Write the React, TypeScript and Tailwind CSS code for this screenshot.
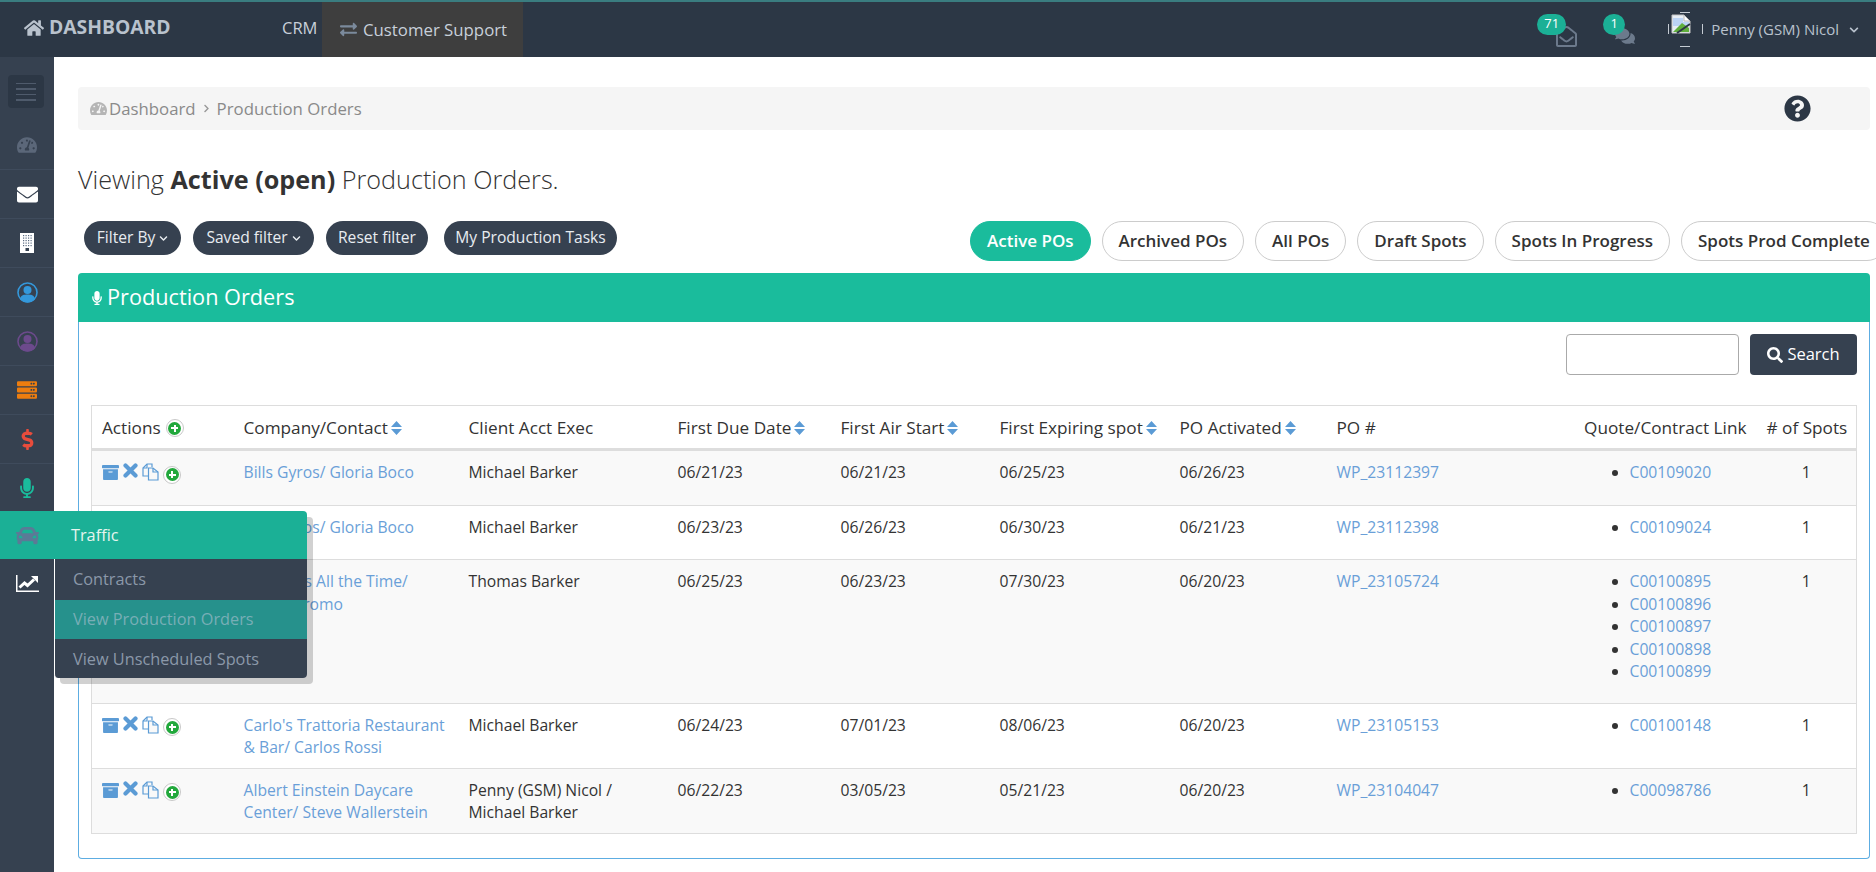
import {
  FaArchive,
  FaCar,
  FaChevronDown,
  FaChevronRight,
  FaComments,
  FaDollarSign,
  FaEnvelope,
  FaExchangeAlt,
  FaHome,
  FaMicrophone,
  FaQuestionCircle,
  FaRegEnvelopeOpen,
  FaSearch,
  FaServer,
  FaTachometerAlt,
} from "react-icons/fa";

type Row = {
  company: string;
  exec: string;
  due: string;
  air: string;
  expiring: string;
  activated: string;
  po: string;
  links: string[];
};

const rows: Row[] = [
  {
    company: "Bills Gyros/ Gloria Boco",
    exec: "Michael Barker",
    due: "06/21/23",
    air: "06/21/23",
    expiring: "06/25/23",
    activated: "06/26/23",
    po: "WP_23112397",
    links: ["C00109020"],
  },
  {
    company: "Bills Gyros/ Gloria Boco",
    exec: "Michael Barker",
    due: "06/23/23",
    air: "06/26/23",
    expiring: "06/30/23",
    activated: "06/21/23",
    po: "WP_23112398",
    links: ["C00109024"],
  },
  {
    company: "Antonio's All the Time/ Marco Promo",
    exec: "Thomas Barker",
    due: "06/25/23",
    air: "06/23/23",
    expiring: "07/30/23",
    activated: "06/20/23",
    po: "WP_23105724",
    links: ["C00100895", "C00100896", "C00100897", "C00100898", "C00100899"],
  },
  {
    company: "Carlo's Trattoria Restaurant & Bar/ Carlos Rossi",
    exec: "Michael Barker",
    due: "06/24/23",
    air: "07/01/23",
    expiring: "08/06/23",
    activated: "06/20/23",
    po: "WP_23105153",
    links: ["C00100148"],
  },
  {
    company: "Albert Einstein Daycare Center/ Steve Wallerstein",
    exec: "Penny (GSM) Nicol / Michael Barker",
    due: "06/22/23",
    air: "03/05/23",
    expiring: "05/21/23",
    activated: "06/20/23",
    po: "WP_23104047",
    links: ["C00098786"],
  },
];

const tabs = ["Archived POs", "All POs", "Draft Spots", "Spots In Progress", "Spots Prod Complete"];

const SortArrows = () => (
  <svg width="11" height="14" viewBox="0 0 11 14" className="inline-block ml-[3px] align-[-1px]">
    <path d="M5.5 0 L11 6 H0 Z M0 8 H11 L5.5 14 Z" fill="#5b9bd5" />
  </svg>
);

const AddIcon = () => (
  <span className="inline-flex w-[18px] h-[18px] rounded-full bg-white border border-[#c8c8c8] items-center justify-center">
    <span className="w-[13px] h-[13px] rounded-full bg-[#22a83c] flex items-center justify-center relative">
      <span className="absolute w-[7px] h-[2px] bg-white" />
      <span className="absolute w-[2px] h-[7px] bg-white" />
    </span>
  </span>
);

const CloseIcon = () => (
  <svg width="15" height="15" viewBox="0 0 15 15">
    <path d="M2.5 2.5 L12.5 12.5 M12.5 2.5 L2.5 12.5" stroke="#5b9bd5" strokeWidth="4.2" strokeLinecap="round" />
  </svg>
);

const CopyIcon = () => (
  <svg width="17" height="18" viewBox="0 0 17 18" fill="none" stroke="#5b9bd5" strokeWidth="1.2">
    <path d="M10 4 V1 H5 L1 5 V13 H6" />
    <path d="M5 1 V5 H1" />
    <path d="M6.5 5 H11 L16 9 V17 H6.5 Z" fill="#f9f9f9" />
    <path d="M11 5 V9 H16" />
  </svg>
);

const BuildingIcon = () => (
  <svg width="14" height="20" viewBox="0 0 14 20">
    <rect width="14" height="20" fill="#fff" />
    {[3, 5.5, 8, 10.5].map((x) =>
      [2, 4.5, 7, 9.5, 12].map((y) => (
        <rect key={`${x}-${y}`} x={x} y={y} width="1.2" height="1.2" fill="#5b6b82" />
      ))
    )}
    <rect x="5.5" y="15" width="3.5" height="3" fill="#364150" />
  </svg>
);

const PersonRing = ({ color }: { color: string }) => (
  <svg width="21" height="21" viewBox="0 0 21 21">
    <circle cx="10.5" cy="10.5" r="9.5" fill="none" stroke={color} strokeWidth="1.6" />
    <circle cx="10.5" cy="8" r="4" fill={color} />
    <path d="M3 17 C4 13 7 12.5 10.5 12.5 C14 12.5 17 13 18 17 C15 21.5 6 21.5 3 17 Z" fill={color} />
  </svg>
);

const TrendIcon = () => (
  <svg width="23" height="17" viewBox="0 0 23 17" fill="none">
    <path d="M0.75 0 V16.25 H23" stroke="#fff" strokeWidth="1.5" />
    <path d="M3.5 12.5 L8.5 8 L11.5 10.5 L18 4.5" stroke="#fff" strokeWidth="3" />
    <path d="M15 1 H22 V8 Z" fill="#fff" />
  </svg>
);

const BrokenImage = () => (
  <svg width="20" height="20" viewBox="0 0 20 20">
    <path d="M1 1 H13 L19 7 V19 H1 Z" fill="#e8eef5" stroke="#c4c4c4" />
    <path d="M13 1 V7 H19 Z" fill="#fff" stroke="#b8b8b8" />
    <path d="M2 4 H12 V8 H18 V12 L2 12 Z" fill="#bcd4f5" />
    <path d="M2 18 L11 9 L18 14 V18 Z" fill="#5fae3c" />
    <path d="M6 19 L19 10" stroke="#2c3745" strokeWidth="2" />
  </svg>
);

const AvatarRing = () => (
  <svg width="35" height="35" viewBox="0 0 35 35" fill="none" stroke="#c5cbd3" className="absolute left-0 top-0">
    <path d="M12 0.5 H22" />
    <path d="M12 34.5 H22" />
    <path d="M0.5 12 V22" />
    <path d="M34.5 12 V22" />
  </svg>
);

const sideIcons = [
  <FaTachometerAlt size={20} className="text-[#5b6779]" />,
  <FaEnvelope size={21} className="text-white" />,
  <BuildingIcon />,
  <PersonRing color="#3498db" />,
  <PersonRing color="#6c4a8c" />,
  <FaServer size={20} className="text-[#ed7d0f]" />,
  <FaDollarSign size={21} className="text-[#e74c3c]" />,
  <FaMicrophone size={20} className="text-[#1abc9c]" />,
];

const TopBar = () => (
  <header className="h-[57px] shrink-0 bg-[#2c3745] border-t-2 border-[#3a7d80] flex items-stretch text-[#c8d0da]">
    <div className="w-[282px] pl-[24px] flex items-center pb-[4px] shrink-0">
      <FaHome size={20} className="text-[#b9c2cd]" />
      <span className="ml-[5px] text-[19.3px] font-bold text-[#b9c2cd]">DASHBOARD</span>
    </div>
    <div className="w-[40px] flex items-center text-[16.5px] pb-[2px]">CRM</div>
    <div className="w-[201px] bg-[#3e3e3e] flex items-center pl-[18px] text-[16.8px]">
      <FaExchangeAlt size={17} className="text-[#7b8a9c]" />
      <span className="ml-[6px]">Customer Support</span>
    </div>
    <div className="ml-auto flex items-center pr-[17px]">
      <div className="relative w-[40px] h-[30px] mr-[26px] ml-[2px]">
        <FaRegEnvelopeOpen size={21} className="absolute right-0 bottom-[-2px] text-[#6c7a8c]" />
        <span className="absolute left-0 top-[-1px] w-[29px] h-[21px] rounded-full bg-[#1bb096] text-white text-[13px] flex items-center justify-center">
          71
        </span>
      </div>
      <div className="relative w-[32px] h-[30px] mr-[33px]">
        <FaComments size={20} className="absolute right-0 bottom-[-1px] text-[#6c7a8c]" />
        <span className="absolute left-0 top-[-1px] w-[22px] h-[21px] rounded-full bg-[#1bb096] text-white text-[13px] flex items-center justify-center">
          1
        </span>
      </div>
      <div className="relative w-[35px] h-[35px] pl-[3px] pt-[2px] mr-[8px]">
        <AvatarRing />
        <BrokenImage />
      </div>
      <span className="text-[15px] text-[#b9c2cd]">Penny (GSM) Nicol</span>
      <FaChevronDown size={10} className="ml-[10px] text-[#b9c2cd]" />
    </div>
  </header>
);

const SideBar = () => (
  <aside className="relative w-[54px] shrink-0 bg-[#364150]">
    <div className="h-[64px] pt-[18px] pl-[8px]">
      <div className="w-[36px] h-[33px] rounded-[4px] bg-[#2c3745] flex flex-col items-center justify-center gap-[4px]">
        <span className="w-[20px] h-[1.5px] bg-[#4f5b6c]" />
        <span className="w-[20px] h-[1.5px] bg-[#4f5b6c]" />
        <span className="w-[20px] h-[1.5px] bg-[#4f5b6c]" />
        <span className="w-[20px] h-[1.5px] bg-[#4f5b6c]" />
      </div>
    </div>
    {sideIcons.map((icon, i) => (
      <div key={i} className="h-[49px] flex items-center justify-center border-b border-[#3f4b5c] last:border-b-0">
        {icon}
      </div>
    ))}
    <div className="h-[46px]" />
    <div className="h-[49px] flex items-center justify-center">
      <TrendIcon />
    </div>

    {/* flyout for the hovered Traffic item */}
    <div className="absolute left-[54px] top-[454px] z-10 w-[253px] rounded-[4px] shadow-[6px_6px_0_rgba(0,0,0,0.18)]">
      <div className="h-[48px] ml-[-54px] bg-[#1bb096] rounded-tr-[4px] flex items-center">
        <span className="w-[54px] flex justify-center">
          <FaCar size={23} className="text-[#5b7a96]" />
        </span>
        <span className="ml-[17px] text-[16.3px] text-[#e6f5ef]">Traffic</span>
      </div>
      <div className="border-l border-white bg-[#364150] rounded-b-[4px] text-[16.3px] text-[#8b98a9]">
        <div className="h-[41px] pl-[18px] flex items-center">Contracts</div>
        <div className="h-[39px] pl-[18px] flex items-center bg-[#26918c] text-[#78aeb6]">View Production Orders</div>
        <div className="h-[39px] pl-[18px] pt-[1px] flex items-center">View Unscheduled Spots</div>
      </div>
    </div>
  </aside>
);

const ProductionTable = () => (
  <table className="w-[1766px] table-fixed border-collapse border border-[#ddd] text-[15.7px] leading-[22.5px] text-[#333]">
    <thead>
      <tr className="h-[44px] border-b-[3px] border-[#ddd] text-left text-[17.2px]">
        <th className="w-[142px] pl-[10px] pt-[2px] font-medium">
          <span className="flex items-center gap-[5px]">Actions <AddIcon /></span>
        </th>
        <th className="w-[225px] pl-[10px] pt-[2px] font-medium">Company/Contact<SortArrows /></th>
        <th className="w-[209px] pl-[10px] pt-[2px] font-medium">Client Acct Exec</th>
        <th className="w-[163px] pl-[10px] pt-[2px] font-medium">First Due Date<SortArrows /></th>
        <th className="w-[159px] pl-[10px] pt-[2px] font-medium">First Air Start<SortArrows /></th>
        <th className="w-[180px] pl-[10px] pt-[2px] font-medium whitespace-nowrap">First Expiring spot<SortArrows /></th>
        <th className="w-[157px] pl-[10px] pt-[2px] font-medium">PO Activated<SortArrows /></th>
        <th className="w-[245px] pl-[10px] pt-[2px] font-medium">PO #</th>
        <th className="w-[185px] pt-[2px] font-medium text-right pr-[10px] whitespace-nowrap">Quote/Contract Link</th>
        <th className="pl-[10px] pt-[2px] font-medium whitespace-nowrap"># of Spots</th>
      </tr>
    </thead>
    <tbody>
      {rows.map((r, i) => (
        <tr key={i} className={`border-t border-[#ddd] align-top ${i % 2 === 0 ? "bg-[#f9f9f9]" : "bg-white"}`}>
          <td className="pl-[10px] pt-[10px] pb-[9px]">
            <div className="flex items-start h-[22px] pt-[3px]">
              <FaArchive size={17} className="text-[#5b9bd5]" />
              <span className="ml-[4px] mt-[-1px]"><CloseIcon /></span>
              <span className="ml-[4px] mt-[-1px]"><CopyIcon /></span>
              <span className="ml-[4px]"><AddIcon /></span>
            </div>
          </td>
          <td className="pl-[10px] pt-[10px] pb-[9px] pr-[12px] text-[#6a9fd8]">{r.company}</td>
          <td className="pl-[10px] pt-[10px] pb-[9px] pr-[30px]">{r.exec}</td>
          <td className="pl-[10px] pt-[10px] pb-[9px]">{r.due}</td>
          <td className="pl-[10px] pt-[10px] pb-[9px]">{r.air}</td>
          <td className="pl-[10px] pt-[10px] pb-[9px]">{r.expiring}</td>
          <td className="pl-[10px] pt-[10px] pb-[9px]">{r.activated}</td>
          <td className="pl-[10px] pt-[10px] pb-[9px] text-[#6a9fd8]">{r.po}</td>
          <td className="pt-[10px] pb-[10px]">
            <ul className={`list-disc pl-[58px] text-[#6a9fd8] marker:text-[#333] ${r.links.length > 1 ? "mb-[10px]" : "mb-[11px]"}`}>
              {r.links.map((l) => (
                <li key={l}>{l}</li>
              ))}
            </ul>
          </td>
          <td className="pt-[10px] pb-[9px] text-center">1</td>
        </tr>
      ))}
    </tbody>
  </table>
);

export default function App() {
  return (
    <div className="h-[872px] overflow-hidden flex flex-col bg-white font-['Open_Sans',sans-serif] text-[#333]">
      <TopBar />
      <div className="flex flex-1 min-h-0">
        <SideBar />
        <main className="flex-1 min-w-0 pl-[24px] pr-[6px] pt-[30px]">
          <div className="h-[43px] rounded-[4px] bg-[#f5f5f5] flex items-center pl-[12px] pr-[59px] text-[16.8px] text-[#8a8a8a]">
            <FaTachometerAlt size={17} className="text-[#b5b5b5]" />
            <span className="ml-[2px]">Dashboard</span>
            <FaChevronRight size={9} className="mx-[6px] text-[#999]" />
            <span>Production Orders</span>
            <FaQuestionCircle size={27} className="ml-auto text-[#2c3745]" />
          </div>

          <h1 className="mt-[31px] h-[60px] text-[25.2px] leading-[36px] font-light text-[#333]">
            Viewing <b className="font-bold">Active (open)</b> Production Orders.
          </h1>

          <div className="flex items-start h-[52px]">
            <div className="w-[892px] shrink-0 pl-[6px] flex items-center text-[15.6px] text-[#e8ecf0]">
              <button className="h-[34px] w-[97px] rounded-full bg-[#364150] flex items-center justify-center gap-[4px]">
                Filter By <FaChevronDown size={9} />
              </button>
              <button className="ml-[12px] h-[34px] w-[121px] rounded-full bg-[#364150] flex items-center justify-center gap-[4px]">
                Saved filter <FaChevronDown size={9} />
              </button>
              <button className="ml-[12px] h-[34px] w-[102px] rounded-full bg-[#364150]">Reset filter</button>
              <button className="ml-[16px] h-[34px] w-[173px] rounded-full bg-[#364150]">My Production Tasks</button>
            </div>
            <div className="flex gap-[11px] shrink-0 text-[17px] font-semibold">
              <button className="h-[40px] px-[16px] rounded-full bg-[#1abc9c] text-white border border-[#1abc9c]">Active POs</button>
              {tabs.map((t) => (
                <button key={t} className="h-[40px] px-[16px] rounded-full bg-white border border-[#ccc] text-[#333] whitespace-nowrap">
                  {t}
                </button>
              ))}
            </div>
          </div>

          <section>
            <div className="h-[49px] bg-[#1abc9c] rounded-t-[4px] flex items-center pl-[12px] text-white text-[21.7px]">
              <FaMicrophone size={14} />
              <span className="ml-[3px]">Production Orders</span>
            </div>
            <div className="h-[537px] border border-t-0 border-[#5dade2] rounded-b-[4px] pt-[12px] px-[12px]">
              <div className="flex justify-end h-[41px] mb-[30px]">
                <input className="w-[173px] h-[41px] border border-[#aaa] rounded-[4px] bg-white" />
                <button className="ml-[11px] w-[107px] h-[41px] rounded-[4px] bg-[#364150] text-white text-[16.5px] flex items-center justify-center gap-[4px]">
                  <FaSearch size={16} /> Search
                </button>
              </div>
              <ProductionTable />
            </div>
          </section>
        </main>
      </div>
    </div>
  );
}
